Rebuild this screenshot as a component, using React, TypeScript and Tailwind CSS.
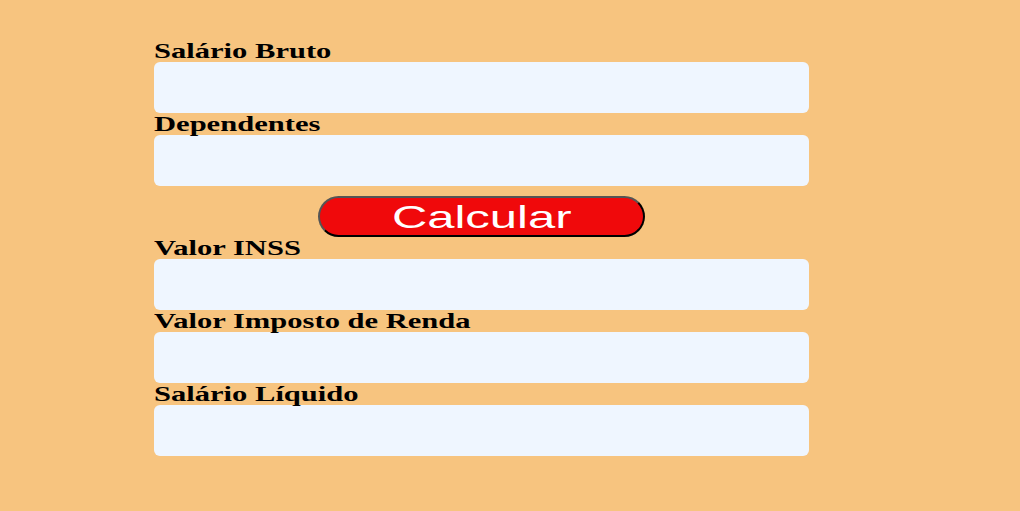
export default function App() {
  const Label = ({ children }: { children: string }) => (
    <div className="h-[22px] leading-[22px]">
      <span className="inline-block origin-left scale-x-[1.455] font-['Liberation_Serif',serif] text-[21px] font-bold text-black">
        {children}
      </span>
    </div>
  );
  const Field = () => <div className="h-[51px] w-[655px] rounded-[6px] bg-[#eff6ff]" />;
  return (
    <div className="h-[511px] w-[1020px] bg-[#f7c47f] pl-[154px] pt-[40px]">
      <div className="flex w-[655px] flex-col">
        <Label>Salário Bruto</Label>
        <Field />
        <Label>Dependentes</Label>
        <Field />
        <div className="mt-[10px] flex justify-center">
          <button className="flex h-[41px] w-[327px] items-center justify-center rounded-full border-2 border-[#555] border-b-black border-r-black bg-[#f0090b]">
            <span className="inline-block scale-x-[1.53] font-['Liberation_Sans',Arial,sans-serif] text-[32px] leading-none text-white">
              Calcular
            </span>
          </button>
        </div>
        <Label>Valor INSS</Label>
        <Field />
        <Label>Valor Imposto de Renda</Label>
        <Field />
        <Label>Salário Líquido</Label>
        <Field />
      </div>
    </div>
  );
}
